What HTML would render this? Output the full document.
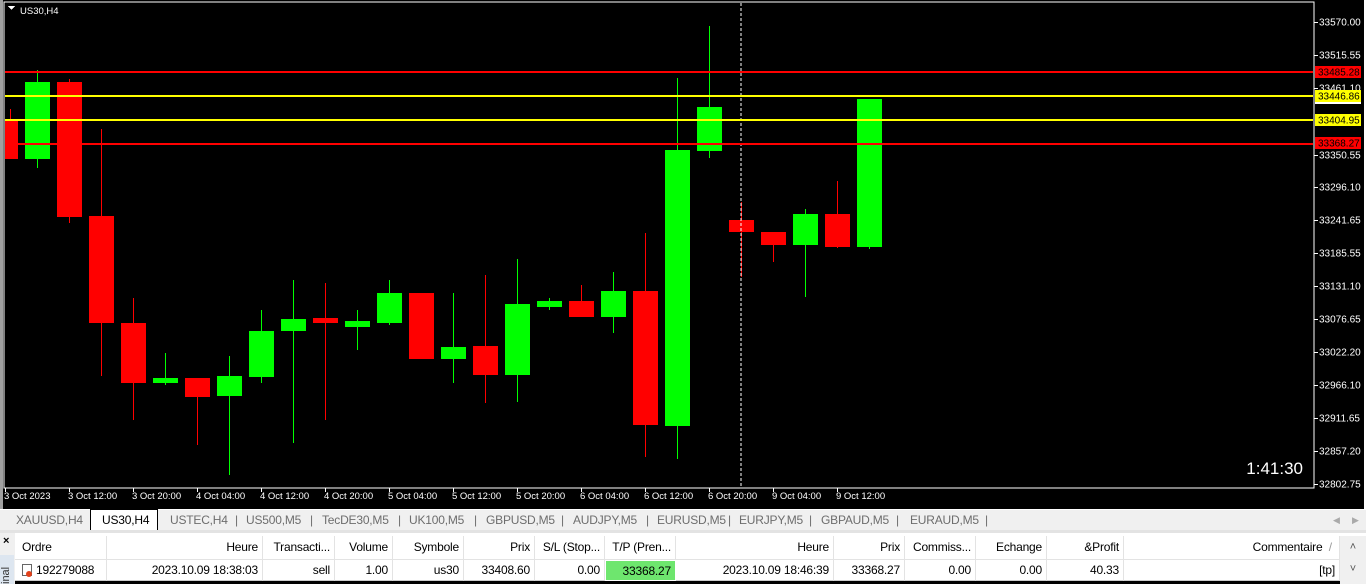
<!DOCTYPE html>
<html><head><meta charset="utf-8"><style>
*{margin:0;padding:0;box-sizing:border-box}
body{width:1366px;height:581px;overflow:hidden;background:#000;font-family:"Liberation Sans",sans-serif;position:relative}
svg{position:absolute;left:0;top:0}
.tabs{position:absolute;left:0;top:509px;width:1366px;height:21px;background:#f0f0f0;border-top:1px solid #fff;font-size:12px;color:#6d6d6d;letter-spacing:-0.2px}
.tabs span{position:absolute;top:3px}
.grid{position:absolute;left:0;top:530px;width:1366px;height:51px;background:#fff;border-top:3px solid #e3e3e3}
.side{position:absolute;left:0;top:0;width:15px;height:51px;background:#f0f0f0}
.c{position:absolute;font-size:12px;color:#000;white-space:nowrap;overflow:hidden;padding:0 4px;letter-spacing:-0.2px}
.h{top:3px;height:24px;line-height:22px;border-right:1px solid #e3e3e3;border-bottom:1px solid #e3e3e3}
.r{top:27px;height:21px;line-height:21px;border-right:1px solid #e3e3e3;border-bottom:1px solid #ccc}
.ra{text-align:right}
</style></head><body>
<svg width="1366" height="509" xmlns="http://www.w3.org/2000/svg" font-family="Liberation Sans" shape-rendering="crispEdges">
<rect x="0" y="0" width="1366" height="509" fill="#000"/>
<rect x="0" y="0" width="3" height="509" fill="#a0a0a0"/>
<rect x="4" y="2" width="1310" height="486" fill="none" stroke="#fff" stroke-width="1"/>
<path d="M8 6h7l-3.5 4z" fill="#fff"/>
<text x="20" y="14" fill="#fff" font-size="9.5">US30,H4</text>
<g id="candles"></g>
<line x1="741" y1="3" x2="741" y2="487" stroke="#fff" stroke-dasharray="3,2"/>
<rect x="5" y="71" width="1308" height="2" fill="#f00"/>
<rect x="5" y="95" width="1308" height="2" fill="#ff0"/>
<rect x="5" y="119" width="1308" height="2" fill="#ff0"/>
<rect x="5" y="143" width="1308" height="2" fill="#f00"/>
<g fill="#fff" font-size="10" id="py"></g>
<rect x="1315" y="66" width="46" height="12" fill="#f00"/><text x="1318" y="75.5" font-size="10" fill="#000">33485.28</text>
<rect x="1315" y="90" width="46" height="12" fill="#ff0"/><text x="1318" y="99.5" font-size="10" fill="#000">33446.86</text>
<rect x="1315" y="102" width="46" height="2" fill="#fff"/>
<rect x="1315" y="114" width="46" height="12" fill="#ff0"/><text x="1318" y="123.5" font-size="10" fill="#000">33404.95</text>
<rect x="1315" y="137" width="46" height="12" fill="#f00"/><text x="1318" y="146.5" font-size="10" fill="#000">33368.27</text>
<g fill="#fff" font-size="9.5" id="tx"></g>
<text x="1303" y="474" fill="#fff" font-size="17" text-anchor="end">1:41:30</text>
<rect x="1364" y="0" width="2" height="509" fill="#fff"/>
</svg>
<div class="tabs">
<div style="position:absolute;left:90px;top:-1px;width:68px;height:21px;background:#fff;border:1px solid #000;border-bottom:none"></div>
<span style="left:16px">XAUUSD,H4</span><span style="left:102px;color:#000">US30,H4</span>
<span style="left:170px">USTEC,H4</span><span style="left:235px">|</span><span style="left:246px">US500,M5</span><span style="left:310px">|</span><span style="left:322px">TecDE30,M5</span><span style="left:398px">|</span><span style="left:409px">UK100,M5</span><span style="left:474px">|</span><span style="left:486px">GBPUSD,M5</span><span style="left:561px">|</span><span style="left:573px">AUDJPY,M5</span><span style="left:646px">|</span><span style="left:657px">EURUSD,M5</span><span style="left:728px">|</span><span style="left:739px">EURJPY,M5</span><span style="left:809px">|</span><span style="left:821px">GBPAUD,M5</span><span style="left:896px">|</span><span style="left:910px">EURAUD,M5</span><span style="left:985px">|</span>
<span style="left:1333px;font-size:9px;top:5px;color:#aaa">◀</span><span style="left:1352px;font-size:9px;top:5px;color:#aaa">▶</span>
</div>
<div class="grid">
<div class="side"><div style="position:absolute;left:3px;top:2px;font-size:11px;font-weight:bold">×</div><div style="position:absolute;left:0;top:22px;width:14px;height:29px;background:#dde6f0;font-size:11px;writing-mode:vertical-rl;transform:rotate(180deg);color:#333">inal</div></div>
<div class="c h" style="left:15px;width:92px;padding-left:7px">Ordre</div>
<div class="c h ra" style="left:107px;width:156px">Heure</div>
<div class="c h ra" style="left:263px;width:72px">Transacti...</div>
<div class="c h ra" style="left:335px;width:58px">Volume</div>
<div class="c h ra" style="left:393px;width:71px">Symbole</div>
<div class="c h ra" style="left:464px;width:71px">Prix</div>
<div class="c h ra" style="left:535px;width:70px">S/L (Stop...</div>
<div class="c h ra" style="left:605px;width:71px">T/P (Pren...</div>
<div class="c h ra" style="left:676px;width:158px">Heure</div>
<div class="c h ra" style="left:834px;width:71px">Prix</div>
<div class="c h ra" style="left:905px;width:71px">Commiss...</div>
<div class="c h ra" style="left:976px;width:71px">Echange</div>
<div class="c h ra" style="left:1047px;width:77px">&amp;Profit</div>
<div class="c h ra" style="left:1124px;width:216px">Commentaire &nbsp;<span style="color:#999">/</span>&nbsp;</div>
<div class="c r" style="left:15px;width:92px;padding-left:7px"><span style="display:inline-block;width:10px;height:12px;border:1px solid #666;vertical-align:-2px;position:relative;margin-right:4px"><span style="position:absolute;left:3px;top:6px;width:6px;height:6px;border-radius:50%;background:#e2401a"></span></span>192279088</div>
<div class="c r ra" style="left:107px;width:156px">2023.10.09 18:38:03</div>
<div class="c r ra" style="left:263px;width:72px">sell</div>
<div class="c r ra" style="left:335px;width:58px">1.00</div>
<div class="c r ra" style="left:393px;width:71px">us30</div>
<div class="c r ra" style="left:464px;width:71px">33408.60</div>
<div class="c r ra" style="left:535px;width:70px">0.00</div>
<div class="c r ra" style="left:605px;width:71px;background:#6ee66e;border:1px solid #fff">33368.27</div>
<div class="c r ra" style="left:676px;width:158px">2023.10.09 18:46:39</div>
<div class="c r ra" style="left:834px;width:71px">33368.27</div>
<div class="c r ra" style="left:905px;width:71px">0.00</div>
<div class="c r ra" style="left:976px;width:71px">0.00</div>
<div class="c r ra" style="left:1047px;width:77px">40.33</div>
<div class="c r ra" style="left:1124px;width:216px">[tp]</div>
<div style="position:absolute;left:1340px;top:3px;width:26px;height:48px;background:#f0f0f0;font-size:11px;color:#555;text-align:center;line-height:22px">˄<br>˅</div>
</div>
<script>
var C=[[10,'r',119,159,109,159,13],[37,'g',82,159,70,168],[69,'r',82,217,79,223],[101,'r',216,323,129,376],[133,'r',323,383,298,420],[165,'g',378,383,353,385],[197,'r',378,397,378,445],[229,'g',376,396,356,475],[261,'g',331,377,310,383],[293,'g',319,331,280,443],[325,'r',318,323,283,420],[357,'g',321,327,310,350],[389,'g',293,323,280,325],[421,'r',293,359,293,359],[453,'g',347,359,293,383],[485,'r',346,375,275,403],[517,'g',304,375,259,402],[549,'g',301,307,298,310],[581,'r',301,317,285,317],[613,'g',291,317,272,333],[645,'r',291,425,233,457],[677,'g',150,426,78,459],[709,'g',107,151,26,158],[741,'r',220,232,202,277],[773,'r',232,245,232,262],[805,'g',214,245,209,297],[837,'r',214,247,181,248],[869,'g',99,247,99,249]];
var s='';
C.forEach(function(c){var col=c[1]=='g'?'#0f0':'#f00';var x=c[0];
s+='<rect x="'+x+'" y="'+c[4]+'" width="1" height="'+(c[5]-c[4])+'" fill="'+col+'"/>';
if(c[6])s+='<rect x="5" y="'+c[2]+'" width="13" height="'+(c[3]-c[2])+'" fill="'+col+'"/>';
else s+='<rect x="'+(x-12)+'" y="'+c[2]+'" width="25" height="'+(c[3]-c[2])+'" fill="'+col+'"/>';});
document.getElementById('candles').innerHTML=s;
var P=[['33570.00',22],['33515.55',55],['33461.10',88],['33350.55',155],['33296.10',187],['33241.65',220],['33185.55',253],['33131.10',286],['33076.65',319],['33022.20',352],['32966.10',385],['32911.65',418],['32857.20',451],['32802.75',484]];
s='';P.forEach(function(p){s+='<rect x="1314" y="'+p[1]+'" width="4" height="1"/><text x="1319" y="'+(p[1]+3.5)+'">'+p[0]+'</text>';});
document.getElementById('py').innerHTML=s;
var T=['3 Oct 2023','3 Oct 12:00','3 Oct 20:00','4 Oct 04:00','4 Oct 12:00','4 Oct 20:00','5 Oct 04:00','5 Oct 12:00','5 Oct 20:00','6 Oct 04:00','6 Oct 12:00','6 Oct 20:00','9 Oct 04:00','9 Oct 12:00'];
s='';T.forEach(function(t,i){var x=5+64*i;s+='<rect x="'+x+'" y="488" width="1" height="4"/><text x="'+(x-1)+'" y="499">'+t+'</text>';});
document.getElementById('tx').innerHTML=s;
</script>
</body></html>
